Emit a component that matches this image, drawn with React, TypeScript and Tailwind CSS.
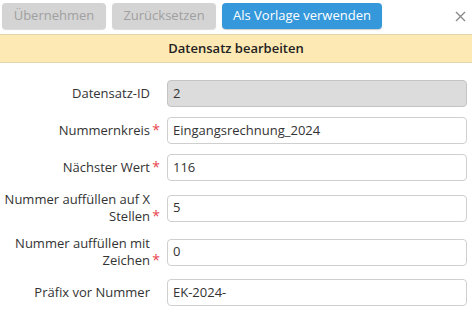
import React from 'react';

type Field = {
  label: string;
  value: string;
  required?: boolean;
  disabled?: boolean;
};

const fields: Field[] = [
  { label: 'Datensatz-ID', value: '2', disabled: true },
  { label: 'Nummernkreis', value: 'Eingangsrechnung_2024', required: true },
  { label: 'Nächster Wert', value: '116', required: true },
  { label: 'Nummer auffüllen auf X Stellen', value: '5', required: true },
  { label: 'Nummer auffüllen mit Zeichen', value: '0', required: true },
  { label: 'Präfix vor Nummer', value: 'EK-2024-' },
];

const App: React.FC = () => {
  return (
    <div className="w-[472px] h-[319px] bg-white overflow-hidden font-['Open_Sans',sans-serif] text-[13px] text-[#333]">
      {/* Toolbar */}
      <div className="flex items-center h-[31px] pl-[2px] pr-[6px] pt-[1px]">
        <button className="w-[104px] h-[26px] rounded-[4px] bg-[#d4d4d4] text-[#a0a0a0] shadow-[0_1px_1px_rgba(0,0,0,0.15)]">
          Übernehmen
        </button>
        <button className="ml-[6px] w-[104px] h-[26px] rounded-[4px] bg-[#d4d4d4] text-[#a0a0a0] shadow-[0_1px_1px_rgba(0,0,0,0.15)]">
          Zurücksetzen
        </button>
        <button className="ml-[6px] w-[160px] h-[26px] rounded-[4px] bg-[#3498db] text-white shadow-[0_1px_1px_rgba(0,0,0,0.2)]">
          Als Vorlage verwenden
        </button>
        <div className="flex-1" />
        <svg width="11" height="11" viewBox="0 0 11 11">
          <path d="M1 1L10 10M10 1L1 10" stroke="#8a8a8a" strokeWidth="1.4" />
        </svg>
      </div>

      {/* Header */}
      <div className="mt-[3px] h-[29px] flex items-center justify-center bg-[#fde9b3] border-y border-[#e3d6ac] font-semibold text-[#222]">
        Datensatz bearbeiten
      </div>

      {/* Form */}
      <div className="flex flex-col gap-[10px] pt-[17px] pr-[5px]">
        {fields.map((f) => (
          <div key={f.label} className="flex items-center">
            <div className="w-[167px] shrink-0 flex justify-end items-end pr-[7px]">
              <span className="relative text-right leading-[17px] pr-[10px] max-w-[160px]">
                {f.label}
                {f.required && (
                  <span className="absolute right-0 bottom-[1px] text-[14px] text-[#e8464d]">*</span>
                )}
              </span>
            </div>
            <div
              className={`flex-1 h-[27px] flex items-center px-[5px] rounded-[4px] border ${
                f.disabled ? 'bg-[#dcdcdc] border-[#c4c4c4]' : 'bg-white border-[#cfcfcf]'
              }`}
            >
              {f.value}
            </div>
          </div>
        ))}
      </div>
    </div>
  );
};

export default App;
